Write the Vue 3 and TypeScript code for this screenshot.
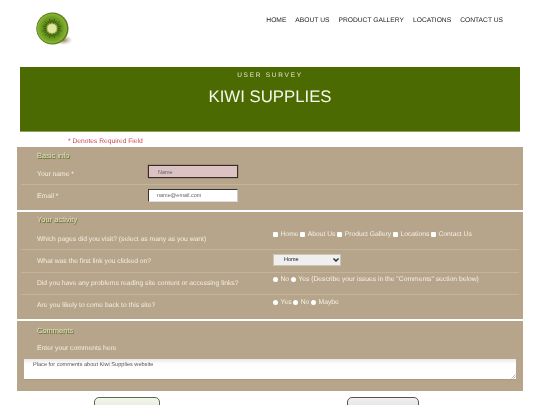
<script setup lang="ts">
const links: string[] = ['HOME', 'ABOUT US', 'PRODUCT GALLERY', 'LOCATIONS', 'CONTACT US']
const pages: string[] = ['Home', 'About Us', 'Product Gallery', 'Locations', 'Contact Us']
const seeds: string[] = Array.from({ length: 24 }, (_, i) => {
  const a = (i / 24) * Math.PI * 2
  const r1 = i % 2 ? 5.2 : 6
  const r2 = i % 2 ? 9.5 : 8.2
  const p = (r: number) => `${(16 + Math.cos(a) * r).toFixed(1)} ${(16.5 + Math.sin(a) * r).toFixed(1)}`
  return `M${p(r1)}L${p(r2)}`
})
</script>

<template>
  <div class="page">
    <header class="top">
      <svg class="logo" width="38" height="35" viewBox="0 0 38 35">
        <defs>
          <radialGradient id="flesh" cx="50%" cy="50%" r="50%">
            <stop offset="0" stop-color="#dfe59a" />
            <stop offset="0.3" stop-color="#c2d35c" />
            <stop offset="0.42" stop-color="#55801a" />
            <stop offset="0.72" stop-color="#6f9f20" />
            <stop offset="0.93" stop-color="#88b334" />
            <stop offset="1" stop-color="#4f7a16" />
          </radialGradient>
          <radialGradient id="shade" cx="50%" cy="50%" r="50%">
            <stop offset="0" stop-color="#7a5a38" stop-opacity="0.9" />
            <stop offset="1" stop-color="#b59a7a" stop-opacity="0" />
          </radialGradient>
        </defs>
        <ellipse cx="27" cy="28" rx="9.500" ry="5" fill="url(#shade)" />
        <circle cx="16.500" cy="16.500" r="16" fill="#5a7a1c" />
        <circle cx="16" cy="16.500" r="15.500" fill="url(#flesh)" />
        <path v-for="(d, i) in seeds" :key="i" :d="d" stroke="#2f4010" stroke-width="0.650" stroke-linecap="round" />
        <circle cx="16" cy="16.500" r="4.200" fill="#e2e7a6" />
      </svg>
      <nav class="nav">
        <a v-for="link in links" :key="link" class="nav-link">{{ link }}</a>
      </nav>
    </header>

    <section class="banner">
      <p class="eyebrow">USER SURVEY</p>
      <h1 class="title">KIWI SUPPLIES</h1>
    </section>

    <p class="required">* Denotes Required Field</p>

    <form class="form">
      <fieldset class="group basic">
        <h2 class="legend">Basic info</h2>
        <div class="row">
          <label class="label name-label">Your name *</label>
          <input class="field invalid" placeholder="Name" />
        </div>
        <div class="row last">
          <label class="label name-label">Email *</label>
          <input class="field email" placeholder="name@email.com" />
        </div>
      </fieldset>

      <fieldset class="group activity">
        <h2 class="legend">Your activity</h2>
        <div class="row">
          <span class="label q">Which pages did you visit? (select as many as you want)</span>
          <span class="options">
            <span v-for="p in pages" :key="p" class="opt"><i class="check"></i>{{ p }}</span>
          </span>
        </div>
        <div class="row">
          <span class="label q">What was the first link you clicked on?</span>
          <span class="select">Home<svg width="6" height="4" viewBox="0 0 6 4"><path d="M0.500 0.500L3 3L5.500 0.500" fill="none" stroke="#222" stroke-width="1.400" /></svg></span>
        </div>
        <div class="row">
          <span class="label q">Did you have any problems reading site content or accessing links?</span>
          <span class="options up">
            <span class="opt"><i class="radio"></i>No</span>
            <span class="opt"><i class="radio"></i>Yes (Describe your issues in the "Comments" section below)</span>
          </span>
        </div>
        <div class="row last">
          <span class="label q">Are you likely to come back to this site?</span>
          <span class="options up">
            <span class="opt"><i class="radio"></i>Yes</span>
            <span class="opt"><i class="radio"></i>No</span>
            <span class="opt"><i class="radio"></i>Maybe</span>
          </span>
        </div>
      </fieldset>

      <fieldset class="group comments">
        <h2 class="legend">Comments</h2>
        <p class="label enter">Enter your comments here</p>
        <div class="area">
          <span>Place for comments about Kiwi Supplies website</span>
          <svg class="grip" width="5" height="5" viewBox="0 0 5 5"><path d="M0.500 4.500L4.500 0.500M2.500 4.500L4.500 2.500" stroke="#999" stroke-width="0.700" /></svg>
        </div>
      </fieldset>
    </form>

    <div class="actions">
      <button type="button" class="btn submit"></button>
      <button type="button" class="btn reset"></button>
    </div>
  </div>
</template>

<style>
html, body { margin: 0; background: #fff; overflow: hidden; }
</style>

<style scoped>
.page {
  width: 540px;
  height: 405px;
  overflow: hidden;
  font-family: "Liberation Sans", Arial, sans-serif;
  text-rendering: geometricPrecision;
  background: #fff;
  filter: blur(0.45px);
}
.top {
  height: 67px;
  display: flex;
  justify-content: space-between;
  align-items: flex-start;
  padding: 0 36px;
  box-sizing: border-box;
}
.logo { margin-top: 12px; }
.nav {
  display: flex;
  gap: 9px;
  margin-top: 15px;
  margin-right: 1px;
}
.nav-link {
  font-size: 6.700px;
  line-height: 11px;
  color: #222;
}
.banner {
  margin: 0 20px;
  height: 65px;
  box-sizing: border-box;
  background: #4b6a02;
  border-bottom: 1px solid #8fa35a;
  text-align: center;
  color: #fff;
  padding-top: 4px;
}
.eyebrow {
  margin: 0;
  font-size: 6.500px;
  line-height: 9px;
  letter-spacing: 1.750px;
  color: #e4e9d4;
}
.title {
  margin: 6px 0 0;
  font-size: 16.800px;
  line-height: 21px;
  font-weight: 400;
  color: #f6f8ea;
}
.required {
  margin: 5px 0 0 68px;
  height: 10px;
  font-size: 6.700px;
  line-height: 9px;
  color: #cc4455;
}
.form {
  margin: 0 17px;
  display: flex;
  flex-direction: column;
  gap: 2px;
}
.group {
  margin: 0;
  padding: 0 4px;
  border: 0;
  background: #b6a58a;
  min-width: 0;
  box-sizing: border-box;
}
.basic { height: 63px; }
.activity { height: 107px; }
.comments { height: 70px; }
.legend {
  margin: 0 0 1px;
  padding: 4px 0 0 16px;
  font-size: 7.500px;
  line-height: 10px;
  font-weight: 400;
  color: #dfe4b4;
  text-shadow: 0.700px 0.700px 0.700px #4e5826;
}
.activity .legend { padding-top: 3px; margin-bottom: 2px; }
.comments .legend { padding-top: 5px; margin-bottom: 0; }
.row {
  display: flex;
  height: 23px;
  border-bottom: 1px solid #c3b49c;
  box-sizing: border-box;
  padding-left: 16px;
  align-items: center;
}
.activity .row { height: 22.500px; }
.activity .row:first-of-type { height: 23px; }
.last { border-bottom: 0; }
.label {
  font-size: 6.750px;
  line-height: 10px;
  color: #f2ede2;
}
.name-label { width: 111px; flex: none; }
.basic .row:first-of-type .name-label { margin-top: 3px; }
.q { width: 236px; flex: none; white-space: nowrap; margin-top: 2px; }
.activity .row:first-of-type .q { margin-top: 4px; }
.activity .last .q { margin-top: 0; }
.field {
  width: 90px;
  height: 13px;
  margin-bottom: 3px;
  padding: 0 0 0 8px;
  box-sizing: border-box;
  border: 1px solid #333;
  border-right-color: #ccc;
  border-bottom-color: #ddd;
  background: #fff;
  font-family: inherit;
  font-size: 5.500px;
  outline: none;
}
.field::placeholder { color: #666; opacity: 1; }
.invalid {
  background: #dcc2c2;
  padding-left: 9px;
  border: 1px solid #3a2a2a;
  box-shadow: 0 0 1px #333;
}
.options {
  display: flex;
  gap: 1.700px;
  font-size: 6.750px;
  line-height: 10px;
  color: #f4efe4;
  white-space: nowrap;
  margin-bottom: 7px;
}
.up { margin-bottom: 7.500px; }
.opt { display: inline-flex; align-items: center; }
.check, .radio {
  display: inline-block;
  width: 5px;
  height: 5px;
  background: #fff;
  margin-right: 2.500px;
  margin-bottom: 1px;
}
.check { border-radius: 1px; }
.radio { border-radius: 50%; }
.select {
  width: 68px;
  height: 12px;
  box-sizing: border-box;
  padding: 0 1px 0 10px;
  margin-bottom: 2px;
  background: #efefef;
  border: 1px solid #ccc5b5;
  font-size: 5.500px;
  line-height: 10px;
  color: #222;
  display: flex;
  justify-content: space-between;
  align-items: center;
}
.enter { margin: 8px 0 0; padding-left: 16px; }
.area {
  position: relative;
  margin: 5px 3px 0;
  height: 21px;
  background: linear-gradient(#e8e8e8, #fff 5px);
  border-bottom: 1px solid #a89a80;
  font-size: 5.600px;
  line-height: 6px;
  color: #555;
  padding: 3px 0 0 9px;
  box-sizing: border-box;
}
.grip { position: absolute; right: 0; bottom: 0; }
.actions {
  position: relative;
  height: 14px;
  margin-top: 6px;
}
.btn {
  position: absolute;
  top: 0;
  height: 24px;
  box-sizing: border-box;
  border: 1px solid #555;
  border-radius: 5px;
}
.submit { left: 94px; width: 66px; background: linear-gradient(#f2f5ec, #dde5ce); border-color: #5a6a4a; }
.reset { left: 347px; width: 72px; background: linear-gradient(#f0f0f0, #d4d4d4); }
</style>
